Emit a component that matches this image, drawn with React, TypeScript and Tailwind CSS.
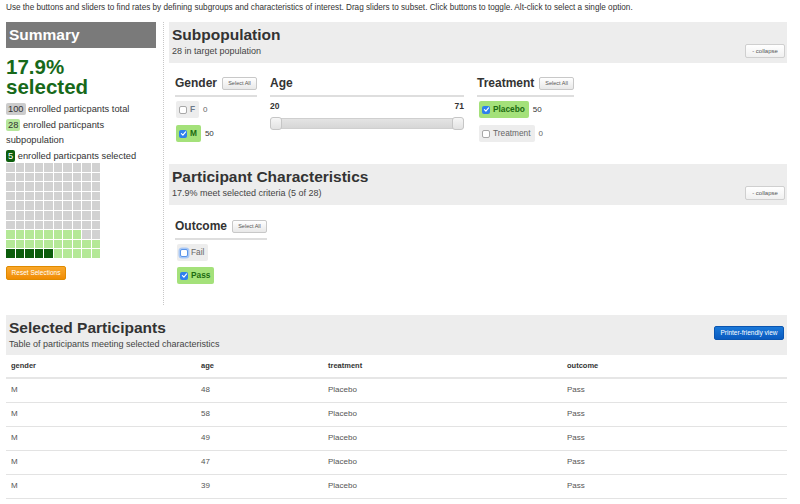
import React from "react";

function Box({ checked, focus }: { checked?: boolean; focus?: boolean }) {
  if (checked)
    return (
      <span className="inline-flex w-[8px] h-[8px] rounded-[2px] bg-[#2f80ed] items-center justify-center shrink-0">
        <svg viewBox="0 0 8 8" className="w-[7px] h-[7px]">
          <path d="M1.6 4.2 L3.3 5.8 L6.4 2.2" fill="none" stroke="white" strokeWidth="1.3" strokeLinecap="round" strokeLinejoin="round" />
        </svg>
      </span>
    );
  if (focus)
    return <span className="inline-block w-[8px] h-[8px] rounded-[2px] bg-white border border-[#5b95ea] ring-[1.5px] ring-[#a9c8f5] shrink-0" />;
  return <span className="inline-block w-[8px] h-[8px] rounded-[2px] bg-white border border-[#a8a8a8] shrink-0" />;
}

function Opt({
  label,
  checked,
  count,
  focus,
  labelClass,
}: {
  label: string;
  checked?: boolean;
  count?: string;
  focus?: boolean;
  labelClass?: string;
}) {
  return (
    <div className="flex items-center gap-[4px] h-[17px]">
      <span
        className={
          checked
            ? "flex items-center gap-[3px] h-[17px] pl-[3px] pr-[4px] rounded-[2px] bg-[#a4e17a] text-[#1b6a10] font-bold text-[8.3px]"
            : "flex items-center gap-[3px] h-[17px] pl-[3px] pr-[4px] rounded-[2px] bg-[#ededed] text-[#666] text-[8.3px]"
        }
      >
        <Box checked={checked} focus={focus} />
        <span className={labelClass}>{label}</span>
      </span>
      {count !== undefined && (
        <span className={checked ? "text-[8px] text-[#333]" : "text-[8px] text-[#666]"}>{count}</span>
      )}
    </div>
  );
}

function SelectAll() {
  return (
    <span className="inline-flex items-center justify-center w-[35px] h-[13px] border border-[#c8c8c8] rounded-[2px] bg-linear-to-b from-white to-[#e8e8e8] text-[5.5px] text-[#555]">
      Select All
    </span>
  );
}

function Heading({ title }: { title: string }) {
  return (
    <div>
      <div className="flex items-center gap-[5px] h-[18px]">
        <span className="text-[12px] font-bold text-[#333]">{title}</span>
        {title !== "Age" && <SelectAll />}
      </div>
      <div className="mt-[3px] h-[2px] bg-[#dedede]" />
    </div>
  );
}

function Collapse() {
  return (
    <span className="inline-flex items-center justify-center w-[40px] h-[14px] border border-[#cfcfcf] rounded-[2px] bg-linear-to-b from-white to-[#f0f0f0] text-[6px] text-[#555]">
      - collapse
    </span>
  );
}

function SectionHeader({ title, sub }: { title: string; sub: string }) {
  return (
    <div className="flex justify-between h-[41px] bg-[#ededed]">
      <div className="pl-[3px] pt-[4px]">
        <div className="text-[15.5px] leading-[18px] font-bold text-[#333]">{title}</div>
        <div className="mt-[2px] text-[9px] leading-[11px] text-[#444]">{sub}</div>
      </div>
      <div className="flex items-end pb-[5px] pr-[2px]">
        <Collapse />
      </div>
    </div>
  );
}

const cells: string[] = Array.from({ length: 100 }, (_, i) => {
  const r = Math.floor(i / 10);
  const c = i % 10;
  if (r < 7) return "g";
  if (r === 7) return c < 8 ? "l" : "g";
  if (r === 8) return "l";
  return c < 5 ? "d" : "l";
});

const rows = [
  ["M", "48", "Placebo", "Pass"],
  ["M", "58", "Placebo", "Pass"],
  ["M", "49", "Placebo", "Pass"],
  ["M", "47", "Placebo", "Pass"],
  ["M", "39", "Placebo", "Pass"],
];

export default function App() {
  return (
    <div className="w-[800px] h-[504px] overflow-hidden bg-white font-['Liberation_Sans',Arial,sans-serif] text-[#333]">
      <div className="h-[22px] pl-[6px] pt-[3px] text-[8.2px] leading-[10px] text-[#333]">
        Use the buttons and sliders to find rates by defining subgroups and characteristics of interest. Drag sliders to subset. Click buttons to toggle. Alt-click to select a single option.
      </div>

      <div className="flex pl-[6px] h-[283px]">
        {/* Summary */}
        <div className="w-[150px] shrink-0">
          <div className="h-[26px] bg-[#7a7a7a] pl-[3px] flex items-center text-white text-[15.5px] font-bold">
            Summary
          </div>
          <div className="mt-[9px] text-[20.5px] leading-[20px] font-bold text-[#17691a]">
            <div className="h-[20px]">17.9%</div>
            <div className="h-[20px]">selected</div>
          </div>
          <div className="mt-[5px] text-[9.3px] leading-[15px] text-[#333] flex flex-col gap-[1px]">
            <div>
              <span className="inline-block leading-[12px] bg-[#cccccc] rounded-[2px] px-[2px]">100</span> enrolled particpants total
            </div>
            <div>
              <div>
                <span className="inline-block leading-[12px] bg-[#b6e79c] rounded-[2px] px-[2px]">28</span>{" "}
                <span>enrolled particpants</span>
              </div>
              <div>subpopulation</div>
            </div>
            <div>
              <span className="inline-block leading-[12px] bg-[#0d5e0d] text-white rounded-[2px] px-[2px]">5</span> enrolled particpants selected
            </div>
          </div>
          <div className="mt-[-1px] grid grid-cols-10 gap-[1px] w-[94px]">
            {cells.map((c, i) => (
              <div
                key={i}
                className={
                  c === "g"
                    ? "h-[8.6px] bg-[#d2d2d2]"
                    : c === "l"
                    ? "h-[8.6px] bg-[#b4e897]"
                    : "h-[8.6px] bg-[#0b5c0b]"
                }
              />
            ))}
          </div>
          <div className="mt-[8px] w-[60px] h-[14px] rounded-[2px] border border-[#e08a00] bg-linear-to-b from-[#f9a82a] to-[#f08c00] flex items-center justify-center text-white text-[6.5px]">
            Reset Selections
          </div>
        </div>

        {/* separator */}
        <div className="ml-[7px] w-0 border-l border-dotted border-[#c8c8c8]" />

        {/* Right column */}
        <div className="ml-[5px] w-[618px]">
          <SectionHeader title="Subpopulation" sub="28 in target population" />
          <div className="h-[101px] pl-[6px] pt-[11px] flex gap-[13px]">
            <div className="w-[82px]">
              <Heading title="Gender" />
              <div className="mt-[4px] flex flex-col gap-[7px] pl-[1px]">
                <Opt label="F" count="0" labelClass="font-bold text-[#6c7a8c]" />
                <Opt label="M" count="50" checked />
              </div>
            </div>
            <div className="w-[194px]">
              <Heading title="Age" />
              <div className="mt-[4px] flex justify-between text-[8.5px] font-bold text-[#333] leading-[10px]">
                <span>20</span>
                <span>71</span>
              </div>
              <div className="relative mt-[7px] h-[11px] border border-[#cfcfcf] rounded-[3px] bg-linear-to-b from-[#e4e4e4] to-[#d6d6d6]">
                <div className="absolute left-[-1px] top-[-2px] w-[12px] h-[13px] rounded-[3px] border border-[#c6c6c6] bg-linear-to-b from-[#f6f6f6] to-[#e2e2e2]" />
                <div className="absolute right-[-1px] top-[-2px] w-[12px] h-[13px] rounded-[3px] border border-[#c6c6c6] bg-linear-to-b from-[#f6f6f6] to-[#e2e2e2]" />
              </div>
            </div>
            <div className="w-[97px]">
              <Heading title="Treatment" />
              <div className="mt-[4px] flex flex-col gap-[7px] pl-[2px]">
                <Opt label="Placebo" count="50" checked />
                <Opt label="Treatment" count="0" />
              </div>
            </div>
          </div>

          <SectionHeader title="Participant Characteristics" sub="17.9% meet selected criteria (5 of 28)" />
          <div className="pl-[6px] pt-[12px] flex">
            <div className="w-[92px]">
              <Heading title="Outcome" />
              <div className="mt-[4px] flex flex-col gap-[6px] pl-[2px]">
                <Opt label="Fail" focus />
                <Opt label="Pass" checked />
              </div>
            </div>
          </div>
        </div>
      </div>

      {/* Selected participants */}
      <div className="mt-[10px] ml-[6px] w-[781px]">
        <div className="flex justify-between h-[40px] bg-[#ededed]">
          <div className="pl-[3px] pt-[4px]">
            <div className="text-[15.5px] leading-[18px] font-bold text-[#333]">Selected Participants</div>
            <div className="mt-[2px] text-[9px] leading-[11px] text-[#444]">
              Table of participants meeting selected characteristics
            </div>
          </div>
          <div className="pt-[3px] pr-[3px]">
            <span className="inline-flex items-center justify-center w-[70px] h-[14px] rounded-[2px] bg-linear-to-b from-[#1a78d8] to-[#0a5bc0] border border-[#0a55b0] text-white text-[6.5px]">
              Printer-friendly view
            </span>
          </div>
        </div>
        <table className="w-full table-fixed border-collapse">
          <colgroup>
            <col className="w-[190px]" />
            <col className="w-[127px]" />
            <col className="w-[239px]" />
            <col className="w-[225px]" />
          </colgroup>
          <thead>
            <tr className="h-[23px] border-b-2 border-[#e6e6e6]">
              <th className="pl-[5px] text-left text-[7.5px] font-bold text-[#333]">gender</th>
              <th className="pl-[5px] text-left text-[7.5px] font-bold text-[#333]">age</th>
              <th className="pl-[5px] text-left text-[7.5px] font-bold text-[#333]">treatment</th>
              <th className="pl-[5px] text-left text-[7.5px] font-bold text-[#333]">outcome</th>
            </tr>
          </thead>
          <tbody>
            {rows.map((r, i) => (
              <tr key={i} className="h-[24px] border-b border-[#e3e3e3]">
                {r.map((v, j) => (
                  <td key={j} className="pl-[5px] text-[8px] text-[#555]">
                    {v}
                  </td>
                ))}
              </tr>
            ))}
          </tbody>
        </table>
      </div>
    </div>
  );
}
